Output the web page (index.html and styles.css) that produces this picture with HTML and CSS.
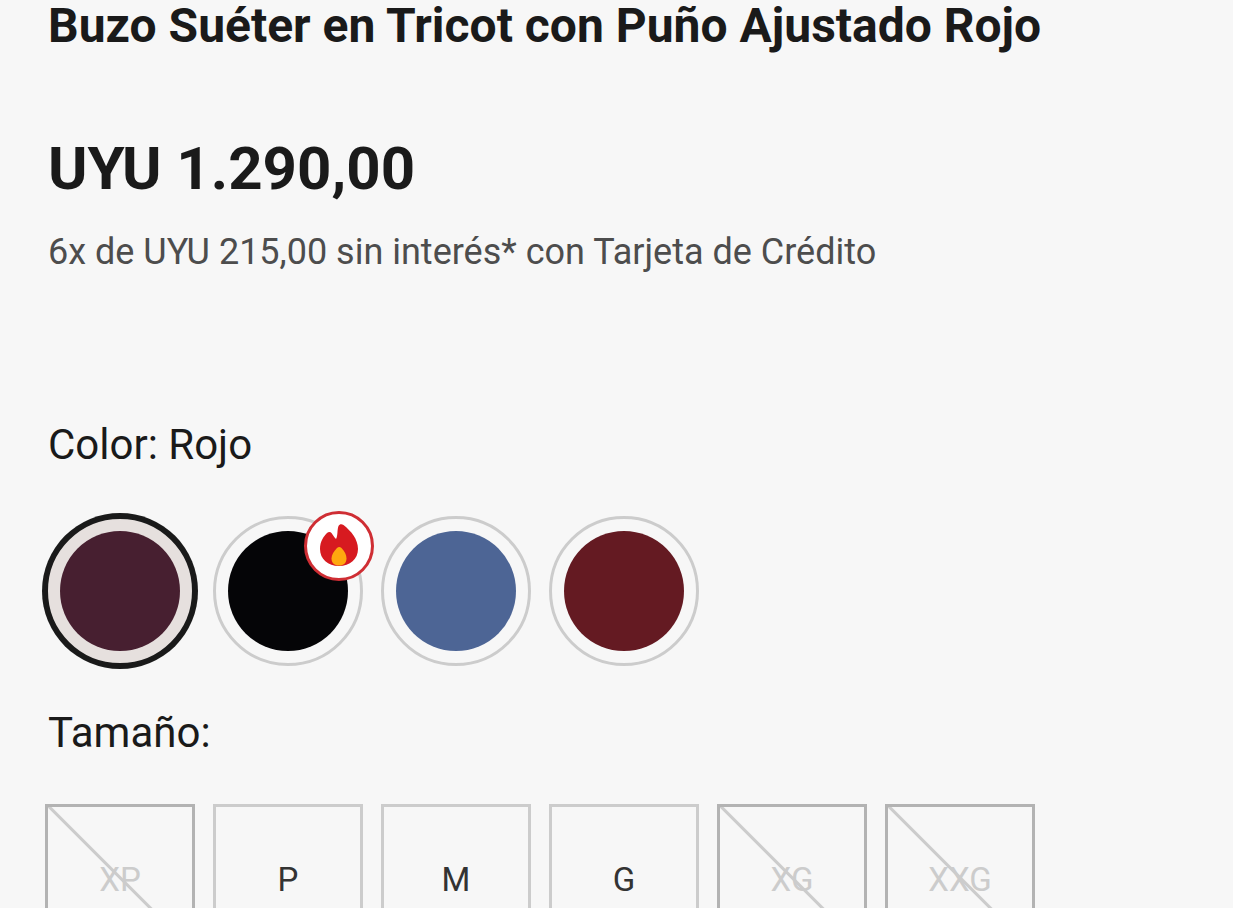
FILE: index.html
```html
<!DOCTYPE html>
<html lang="es">
<head>
    <meta charset="UTF-8">
    <meta name="viewport" content="width=device-width, initial-scale=1">
    <title>Buzo Suéter en Tricot con Puño Ajustado Rojo</title>
    <link rel="stylesheet" href="styles.css">
</head>
<body>
    <main class="product">
        <h1 class="product-title">Buzo Suéter en Tricot con Puño Ajustado Rojo</h1>
        <p class="price">UYU 1.290,00</p>
        <p class="installments">6x de UYU 215,00 sin interés* con Tarjeta de Crédito</p>

        <form>
            <fieldset class="option-group">
                <legend>Color: Rojo</legend>
                <div class="options">
                    <label class="swatch">
                        <input type="radio" name="color" value="rojo" aria-label="Rojo" checked>
                        <span class="dot dot-wine"></span>
                    </label>
                    <label class="swatch">
                        <input type="radio" name="color" value="negro" aria-label="Negro">
                        <span class="dot dot-black"></span>
                        <span class="hot-badge">
                            <svg viewBox="0 0 38 42" width="38" height="42" aria-hidden="true">
                                <path fill="#d71a20" d="M0 25C0 17 4 12 7 9C8.500 7.500 10.500 7.500 11.500 9C12.500 10.500 14 13 16 15C18 12 17 6 18.500 2C19.500 0 21.500-.5 23.500 1C31 7 38 15 38 25C38 35 30 42 19 42C8 42 0 35 0 25Z"/>
                                <path fill="#ffa70f" d="M17 24C18.500 22.500 20 22.500 21.500 24C24.500 27 26.500 31 26.500 34.500C26.500 39 23.500 41.500 19 41.500C14.500 41.500 11.500 39 11.500 34.500C11.500 31 14 27 17 24Z"/>
                            </svg>
                        </span>
                    </label>
                    <label class="swatch">
                        <input type="radio" name="color" value="azul" aria-label="Azul">
                        <span class="dot dot-blue"></span>
                    </label>
                    <label class="swatch">
                        <input type="radio" name="color" value="bordo" aria-label="Bordó">
                        <span class="dot dot-red"></span>
                    </label>
                </div>
            </fieldset>

            <fieldset class="option-group">
                <legend>Tamaño:</legend>
                <div class="options">
                    <label class="size"><input type="radio" name="size" value="XP" disabled><span>XP</span></label>
                    <label class="size"><input type="radio" name="size" value="P"><span>P</span></label>
                    <label class="size"><input type="radio" name="size" value="M"><span>M</span></label>
                    <label class="size"><input type="radio" name="size" value="G"><span>G</span></label>
                    <label class="size"><input type="radio" name="size" value="XG" disabled><span>XG</span></label>
                    <label class="size"><input type="radio" name="size" value="XXG" disabled><span>XXG</span></label>
                </div>
            </fieldset>
        </form>
    </main>
</body>
</html>
```
FILE: styles.css
```css
* {
    box-sizing: border-box;
}

body {
    margin: 0;
    background-color: #f7f7f7;
    color: #1a1a1a;
    font-family: Roboto, sans-serif;
}

.product {
    padding: 0 45px 48px;
}

.product-title,
.price,
.installments,
legend {
    margin: 0;
    padding: 0 3px;
}

.product-title {
    font-size: 48px;
    line-height: 52px;
    font-weight: 700;
}

.price {
    margin-top: 80px;
    font-size: 60px;
    line-height: 74px;
    font-weight: 700;
}

.installments {
    margin-top: 24px;
    margin-bottom: 147px;
    color: #4d4d4d;
    font-size: 36px;
    line-height: 44px;
}

.option-group {
    margin: 0 0 43px;
    padding: 0;
    border: 0;
    min-width: 0;
}

legend {
    font-size: 42px;
    line-height: 48px;
}

.options {
    display: flex;
    flex-wrap: wrap;
    gap: 18px;
    padding-top: 47px;
}

.swatch,
.size {
    position: relative;
    display: grid;
    place-items: center;
    width: 150px;
    height: 150px;
    cursor: pointer;
}

/* input and its content share one grid cell */
.swatch input,
.swatch .dot,
.size input,
.size span {
    grid-area: 1 / 1;
}

.swatch input,
.size input {
    appearance: none;
    width: 100%;
    height: 100%;
    margin: 0;
    border: 3px solid #ccc;
    cursor: inherit;
}

.swatch input {
    border-radius: 50%;
}

.swatch input:checked {
    border-color: #1a1a1a;
    background-color: #e6e0de;
    box-shadow: 0 0 0 3px #1a1a1a;
}

.dot {
    width: 120px;
    height: 120px;
    border-radius: 50%;
    z-index: 1;
}

.dot-wine {
    background-color: #471f30;
}

.dot-black {
    background-color: #050507;
}

.dot-blue {
    background-color: #4d6595;
}

.dot-red {
    background-color: #641a22;
}

.hot-badge {
    position: absolute;
    top: -5px;
    right: -11px;
    z-index: 2;
    display: flex;
    align-items: center;
    justify-content: center;
    width: 70px;
    height: 70px;
    padding-bottom: 3px;
    border: 3px solid #cf2e34;
    border-radius: 50%;
    background-color: #fff;
}

.size {
    color: #333;
    font-size: 33px;
    line-height: 40px;
}

.size span {
    padding-top: 2px;
}

.size input:checked {
    border-color: #1a1a1a;
}

.size:has(input:disabled) {
    color: #ccc;
    cursor: not-allowed;
}

.size input:disabled {
    border-color: #b3b3b3;
    background: linear-gradient(to top right, transparent calc(50% - 1px), #ccc 50%, #ccc calc(50% + 2px), transparent calc(50% + 3px));
}
```
